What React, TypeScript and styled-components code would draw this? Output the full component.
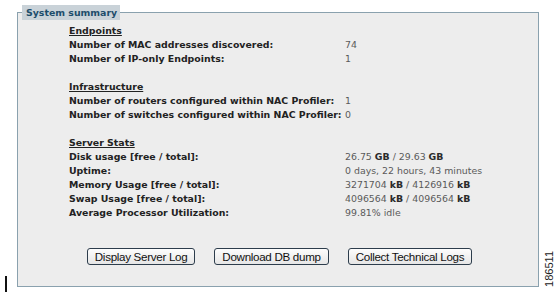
import React from 'react'
import styled, { createGlobalStyle } from 'styled-components'

const GlobalStyle = createGlobalStyle`
  html, body {
    margin: 0;
    background: #ffffff;
  }
`

const Page = styled.div`
  display: flex;
  box-sizing: border-box;
  width: 560px;
  height: 292px;
  padding-top: 5px;
`

const Mark = styled.div`
  align-self: flex-end;
  width: 2px;
  height: 16px;
  margin: 0 10px 0 5px;
  background: #111;
`

const Panel = styled.fieldset`
  box-sizing: border-box;
  width: 522px;
  height: 282px;
  margin: 0;
  padding: 0;
  border: 1px solid #8aa1ae;
  background: #ededed;
  font-family: 'DejaVu Sans', Verdana, sans-serif;
  font-size: 9.4px;
`

const Legend = styled.legend`
  margin-left: 4px;
  padding: 0 3px 0 4px;
  line-height: 15px;
  font-weight: bold;
  color: #1d4d6b;
  background: #c9d2d8;
`

const Content = styled.div`
  padding: 4px 0 0 51px;
`

const Table = styled.div`
  display: grid;
  grid-template-columns: 276px 1fr;
  line-height: 14px;
`

const Heading = styled.div<{ $first?: boolean }>`
  grid-column: 1 / -1;
  margin-top: ${(p) => (p.$first ? '0' : '14px')};
  font-weight: bold;
  color: #222;
  text-decoration: underline;
`

const Label = styled.div`
  font-weight: bold;
  color: #222;
  white-space: nowrap;
`

const Value = styled.div`
  color: #5a5a5a;
  white-space: nowrap;

  b {
    color: #2a2a2a;
  }
`

const Actions = styled.div`
  display: flex;
  justify-content: center;
  gap: 19px;
  margin-top: 28px;
  padding-left: 3px;
`

const Button = styled.button`
  height: 17px;
  padding: 0 7px;
  border: 1px solid #2d3d4c;
  border-radius: 3px;
  background: linear-gradient(#fdfdfd, #e6e6e6);
  font-family: 'Liberation Sans', Arial, sans-serif;
  font-size: 11.6px;
  letter-spacing: -0.3px;
  line-height: 15px;
  color: #111;
`

const FigureId = styled.div`
  align-self: flex-end;
  margin: 0 0 5px 4px;
  writing-mode: vertical-rl;
  transform: rotate(180deg);
  font-family: 'Liberation Sans', Arial, sans-serif;
  font-size: 11px;
  color: #222;
`

type Row = { label: string; value: React.ReactNode }

const sections: { title: string; rows: Row[] }[] = [
  {
    title: 'Endpoints',
    rows: [
      { label: 'Number of MAC addresses discovered:', value: '74' },
      { label: 'Number of IP-only Endpoints:', value: '1' },
    ],
  },
  {
    title: 'Infrastructure',
    rows: [
      { label: 'Number of routers configured within NAC Profiler:', value: '1' },
      { label: 'Number of switches configured within NAC Profiler:', value: '0' },
    ],
  },
  {
    title: 'Server Stats',
    rows: [
      {
        label: 'Disk usage [free / total]:',
        value: (
          <>
            26.75 <b>GB</b> / 29.63 <b>GB</b>
          </>
        ),
      },
      { label: 'Uptime:', value: '0 days, 22 hours, 43 minutes' },
      {
        label: 'Memory Usage [free / total]:',
        value: (
          <>
            3271704 <b>kB</b> / 4126916 <b>kB</b>
          </>
        ),
      },
      {
        label: 'Swap Usage [free / total]:',
        value: (
          <>
            4096564 <b>kB</b> / 4096564 <b>kB</b>
          </>
        ),
      },
      { label: 'Average Processor Utilization:', value: '99.81% idle' },
    ],
  },
]

export default function App() {
  return (
    <>
      <GlobalStyle />
      <Page>
        <Mark />
        <Panel>
          <Legend>System summary</Legend>
          <Content>
            <Table>
              {sections.map((s, i) => (
                <React.Fragment key={s.title}>
                  <Heading $first={i === 0}>{s.title}</Heading>
                  {s.rows.map((r) => (
                    <React.Fragment key={r.label}>
                      <Label>{r.label}</Label>
                      <Value>{r.value}</Value>
                    </React.Fragment>
                  ))}
                </React.Fragment>
              ))}
            </Table>
          </Content>
          <Actions>
            <Button>Display Server Log</Button>
            <Button>Download DB dump</Button>
            <Button>Collect Technical Logs</Button>
          </Actions>
        </Panel>
        <FigureId>186511</FigureId>
      </Page>
    </>
  )
}
